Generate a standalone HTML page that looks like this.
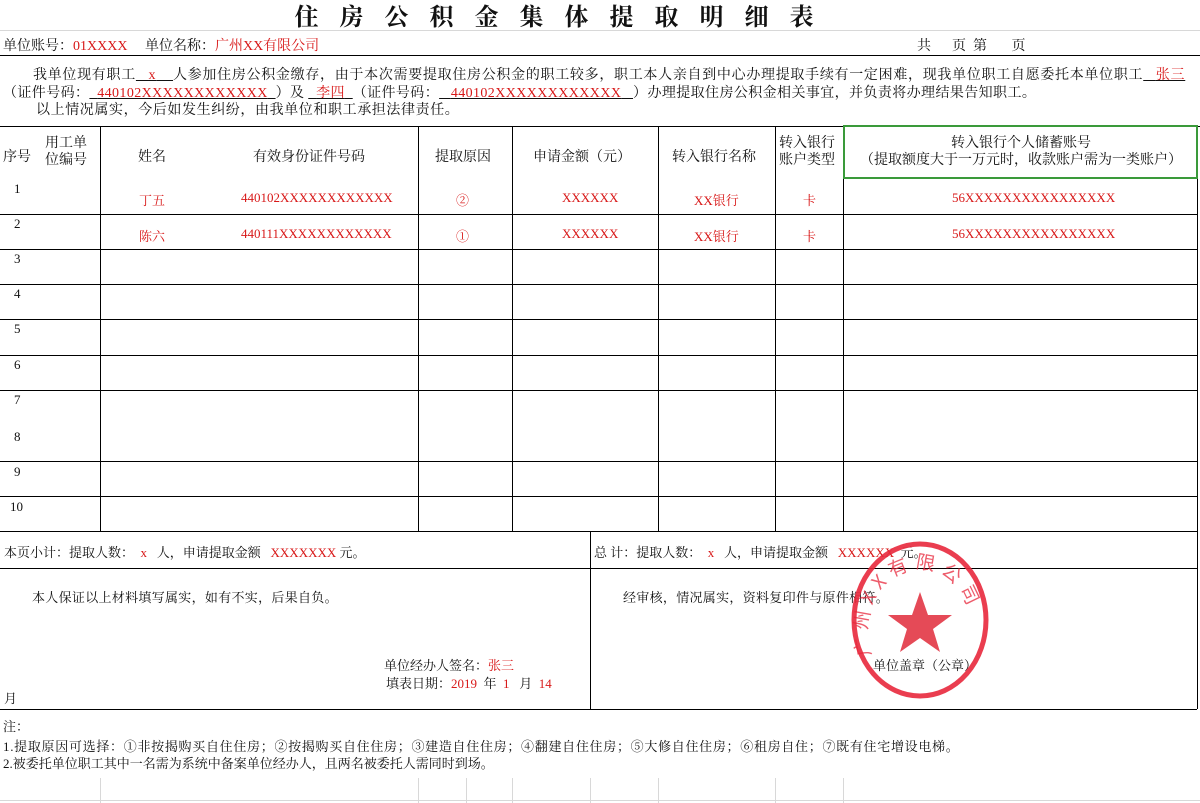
<!DOCTYPE html>
<html><head><meta charset="utf-8"><style>
*{margin:0;padding:0;box-sizing:border-box}
body{width:1200px;height:803px;background:#fff;position:relative;overflow:hidden;font-family:"Liberation Serif","Noto Serif CJK SC","Noto Sans CJK SC",serif;font-size:13px;color:#111}
.a{position:absolute;white-space:nowrap}
.h{position:absolute;height:1px;background:#000}
.v{position:absolute;width:1px;background:#000}
.g{background:#d8d8d8}
.r{color:#d81818}
.c{text-align:center}
.b{font-size:14px}
u{text-decoration:underline}
</style></head><body>
<div class="a" style="left:-46px;width:1200px;top:0px;text-align:center;font-size:24px;font-weight:bold;letter-spacing:21px;font-family:'Noto Serif CJK SC',serif;line-height:30px;padding-left:21px">住房公积金集体提取明细表</div>
<div class="h g" style="left:0;width:1200px;top:30px"></div>
<div class="a b" style="left:3px;top:35px">单位账号：<span class="r">01XXXX</span>&nbsp;&nbsp;&nbsp;&nbsp;&nbsp;单位名称：<span class="r">广州XX有限公司</span></div>
<div class="a b" style="left:917px;top:35px">共&nbsp;&nbsp;&nbsp;&nbsp;&nbsp;&nbsp;页&nbsp;&nbsp;第&nbsp;&nbsp;&nbsp;&nbsp;&nbsp;&nbsp;&nbsp;页</div>
<div class="h" style="left:0;width:1200px;top:55px"></div>
<div class="a b" style="left:33px;top:64px;letter-spacing:0.7px">我单位现有职工<u>&nbsp;&nbsp;&nbsp;<span class="r">x</span>&nbsp;&nbsp;&nbsp;&nbsp;</u>人参加住房公积金缴存，由于本次需要提取住房公积金的职工较多，职工本人亲自到中心办理提取手续有一定困难，现我单位职工自愿委托本单位职工<u>&nbsp;&nbsp;&nbsp;<span class="r">张三</span></u></div>
<div class="a b" style="left:3px;top:82px;letter-spacing:0.4px">（证件号码：<u>&nbsp;&nbsp;<span class="r">440102XXXXXXXXXXXX</span>&nbsp;&nbsp;</u>）及&nbsp;<u>&nbsp;&nbsp;<span class="r">李四</span>&nbsp;&nbsp;</u>（证件号码：<u>&nbsp;&nbsp;&nbsp;<span class="r">440102XXXXXXXXXXXX</span>&nbsp;&nbsp;&nbsp;</u>）办理提取住房公积金相关事宜，并负责将办理结果告知职工。</div>
<div class="a b" style="left:36px;top:99px;letter-spacing:0.6px">以上情况属实，今后如发生纠纷，由我单位和职工承担法律责任。</div>
<div class="h" style="left:0;width:1200px;top:126px"></div>
<div class="v" style="left:100px;top:126px;height:405px"></div>
<div class="v" style="left:418px;top:126px;height:405px"></div>
<div class="v" style="left:512px;top:126px;height:405px"></div>
<div class="v" style="left:658px;top:126px;height:405px"></div>
<div class="v" style="left:775px;top:126px;height:405px"></div>
<div class="v" style="left:843px;top:126px;height:405px"></div>
<div class="v" style="left:1197px;top:126px;height:583px"></div>
<div class="a" style="left:843px;top:125px;width:355px;height:54px;border:2px solid #3a9a3a"></div>
<div class="a b" style="left:3px;top:146px">序号</div>
<div class="a c b" style="left:45px;top:135px;line-height:17px">用工单<br>位编号</div>
<div class="a b" style="left:138px;top:146px">姓名</div>
<div class="a b" style="left:253px;top:146px">有效身份证件号码</div>
<div class="a b" style="left:435px;top:146px">提取原因</div>
<div class="a b" style="left:533px;top:146px">申请金额（元）</div>
<div class="a b" style="left:672px;top:146px">转入银行名称</div>
<div class="a c b" style="left:779px;top:135px;line-height:17px">转入银行<br>账户类型</div>
<div class="a c b" style="left:845px;width:352px;top:135px;line-height:17px">转入银行个人储蓄账号<br>（提取额度大于一万元时，收款账户需为一类账户）</div>
<div class="h" style="left:0;width:1197px;top:214px"></div>
<div class="h" style="left:0;width:1197px;top:249px"></div>
<div class="h" style="left:0;width:1197px;top:284px"></div>
<div class="h" style="left:0;width:1197px;top:319px"></div>
<div class="h" style="left:0;width:1197px;top:355px"></div>
<div class="h" style="left:0;width:1197px;top:390px"></div>
<div class="h" style="left:0;width:1197px;top:461px"></div>
<div class="h" style="left:0;width:1197px;top:496px"></div>
<div class="h" style="left:0;width:1197px;top:531px"></div>
<div class="a" style="left:14px;top:181px">1</div>
<div class="a" style="left:14px;top:216px">2</div>
<div class="a" style="left:14px;top:251px">3</div>
<div class="a" style="left:14px;top:286px">4</div>
<div class="a" style="left:14px;top:321px">5</div>
<div class="a" style="left:14px;top:357px">6</div>
<div class="a" style="left:14px;top:392px">7</div>
<div class="a" style="left:14px;top:429px">8</div>
<div class="a" style="left:14px;top:464px">9</div>
<div class="a" style="left:10px;top:499px">10</div>
<div class="a r" style="left:139px;top:190px">丁五</div>
<div class="a r" style="left:241px;top:190px">440102XXXXXXXXXXXX</div>
<div class="a r" style="left:456px;top:190px">②</div>
<div class="a r" style="left:562px;top:190px">XXXXXX</div>
<div class="a r" style="left:694px;top:190px">XX银行</div>
<div class="a r" style="left:803px;top:190px">卡</div>
<div class="a r" style="left:952px;top:190px">56XXXXXXXXXXXXXXXX</div>
<div class="a r" style="left:139px;top:226px">陈六</div>
<div class="a r" style="left:241px;top:226px">440111XXXXXXXXXXXX</div>
<div class="a r" style="left:456px;top:226px">①</div>
<div class="a r" style="left:562px;top:226px">XXXXXX</div>
<div class="a r" style="left:694px;top:226px">XX银行</div>
<div class="a r" style="left:803px;top:226px">卡</div>
<div class="a r" style="left:952px;top:226px">56XXXXXXXXXXXXXXXX</div>
<div class="v" style="left:590px;top:531px;height:178px"></div>
<div class="a" style="left:4px;top:542px">本页小计：提取人数：&nbsp;&nbsp;<span class="r">x</span>&nbsp;&nbsp;&nbsp;人，申请提取金额&nbsp;&nbsp;&nbsp;<span class="r">XXXXXXX</span>&nbsp;元。</div>
<div class="a" style="left:594px;top:542px">总&nbsp;计：提取人数：&nbsp;&nbsp;<span class="r">x</span>&nbsp;&nbsp;&nbsp;人，申请提取金额&nbsp;&nbsp;&nbsp;<span class="r">XXXXXX</span>&nbsp;&nbsp;元。</div>
<div class="h" style="left:0;width:1197px;top:568px"></div>
<div class="a" style="left:32px;top:587px;letter-spacing:0.3px">本人保证以上材料填写属实，如有不实，后果自负。</div>
<div class="a" style="left:623px;top:587px;letter-spacing:0.3px">经审核，情况属实，资料复印件与原件相符。</div>
<div class="a" style="left:384px;top:655px">单位经办人签名：<span class="r">张三</span></div>
<div class="a" style="left:386px;top:673px">填表日期：<span class="r">2019</span>&nbsp;&nbsp;年&nbsp;&nbsp;<span class="r">1</span>&nbsp;&nbsp;&nbsp;月&nbsp;&nbsp;<span class="r">14</span></div>
<div class="a" style="left:4px;top:688px">月</div>
<div class="a" style="left:873px;top:655px">单位盖章（公章）</div>
<div class="h" style="left:0;width:1197px;top:709px"></div>
<div class="a" style="left:3px;top:716px">注：</div>
<div class="a" style="left:3px;top:736px;letter-spacing:0.7px">1.提取原因可选择：①非按揭购买自住住房；②按揭购买自住住房；③建造自住住房；④翻建自住住房；⑤大修自住住房；⑥租房自住；⑦既有住宅增设电梯。</div>
<div class="a" style="left:3px;top:753px">2.被委托单位职工其中一名需为系统中备案单位经办人，且两名被委托人需同时到场。</div>
<div class="v g" style="left:100px;top:778px;height:25px"></div>
<div class="v g" style="left:418px;top:778px;height:25px"></div>
<div class="v g" style="left:466px;top:778px;height:25px"></div>
<div class="v g" style="left:512px;top:778px;height:25px"></div>
<div class="v g" style="left:590px;top:778px;height:25px"></div>
<div class="v g" style="left:658px;top:778px;height:25px"></div>
<div class="v g" style="left:775px;top:778px;height:25px"></div>
<div class="v g" style="left:843px;top:778px;height:25px"></div>
<div class="h g" style="left:0;width:1200px;top:800px"></div>
<svg class="a" style="left:850px;top:540px" width="140" height="160" viewBox="0 0 140 160">
<defs><path id="arc" d="M22,115 A52,62 0 1,1 118,115"/></defs>
<ellipse cx="70" cy="80" rx="66" ry="76" fill="none" stroke="#e8283c" stroke-width="5" opacity="0.9"/>
<polygon points="70,52 78,75 102,75 83,89 90,112 70,98 50,112 57,89 38,75 62,75" fill="#e02a3a" opacity="0.85"/>
<text fill="#e8283c" font-size="19" opacity="0.75" font-family="Noto Sans CJK SC,sans-serif" letter-spacing="6"><textPath href="#arc">广州XX有限公司</textPath></text>
</svg>
</body></html>
